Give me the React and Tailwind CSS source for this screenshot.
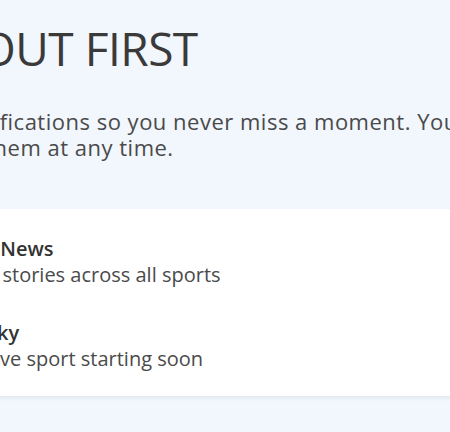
const ITEMS = [
  { title: 'Sky News', sub: 'Top stories across all sports' },
  { title: 'In Sky', sub: 'All live sport starting soon' },
];

export default function App() {
  return (
    <div
      className="w-[450px] h-[432px] overflow-hidden bg-[#f2f6fd] text-[#3a3a3a]"
      style={{ fontFamily: "'Open Sans', 'Noto Sans', sans-serif" }}
    >
      {/* header, scrolled so its left edge is off screen */}
      <div className="-ml-[121px] w-[900px] pt-[24px]">
        <h1 className="-ml-[13px] text-[46px] leading-[48px] font-normal whitespace-nowrap tracking-[-0.5px]">FIND OUT FIRST</h1>
        <p className="mt-[36px] text-[22px] leading-[26px] tracking-[0.5px] text-[#4a4a4a]">
          <span className="block whitespace-nowrap">Enable notifications so you never miss a moment. You</span>
          <span className="block whitespace-nowrap">can mute them at any time.</span>
        </p>
      </div>

      {/* preferences card */}
      <div className="mt-[49px] -ml-[62px] w-[800px] bg-white shadow-[0_2px_4px_rgba(30,60,120,0.08)]">
        <div className="pl-[24px] pt-[27px] pb-[24px] flex flex-col gap-[32px]">
          {ITEMS.map((item) => (
            <div key={item.title} className="flex flex-col whitespace-nowrap">
              <span className="text-[20px] leading-[26px] font-semibold text-[#333]">{item.title}</span>
              <span className="text-[20px] leading-[26px] text-[#4a4a4a]">{item.sub}</span>
            </div>
          ))}
        </div>
      </div>
    </div>
  );
}
